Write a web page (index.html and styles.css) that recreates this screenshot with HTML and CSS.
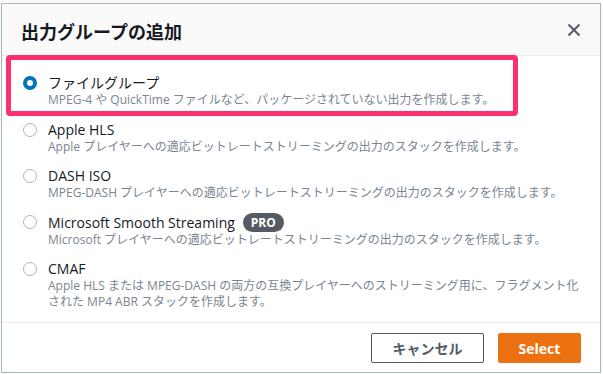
FILE: index.html
```html
<!DOCTYPE html>
<html lang="ja">
<head>
    <meta charset="UTF-8">
    <meta name="viewport" content="width=device-width, initial-scale=1.0">
    <title>出力グループの追加</title>
    <link rel="stylesheet" href="styles.css">
</head>
<body>
    <div class="modal">
        <div class="modal-header">
            <h2>出力グループの追加</h2>
            <button class="close-btn" aria-label="閉じる">
                <svg width="14" height="14" viewBox="0 0 14 14">
                    <path d="M1.5 1.5 L12.5 12.5 M12.5 1.5 L1.5 12.5" stroke="#545b64" stroke-width="2" fill="none"/>
                </svg>
            </button>
        </div>

        <div class="modal-body">
            <div class="highlight"></div>

            <label class="option">
                <span class="radio checked"></span>
                <span class="option-text">
                    <span class="option-label">ファイルグループ</span>
                    <span class="option-desc">MPEG-4 や QuickTime ファイルなど、パッケージされていない出力を作成します。</span>
                </span>
            </label>

            <label class="option">
                <span class="radio"></span>
                <span class="option-text">
                    <span class="option-label">Apple HLS</span>
                    <span class="option-desc">Apple プレイヤーへの適応ビットレートストリーミングの出力のスタックを作成します。</span>
                </span>
            </label>

            <label class="option">
                <span class="radio"></span>
                <span class="option-text">
                    <span class="option-label">DASH ISO</span>
                    <span class="option-desc">MPEG-DASH プレイヤーへの適応ビットレートストリーミングの出力のスタックを作成します。</span>
                </span>
            </label>

            <label class="option">
                <span class="radio"></span>
                <span class="option-text">
                    <span class="option-label">Microsoft Smooth Streaming <span class="badge">PRO</span></span>
                    <span class="option-desc">Microsoft プレイヤーへの適応ビットレートストリーミングの出力のスタックを作成します。</span>
                </span>
            </label>

            <label class="option">
                <span class="radio"></span>
                <span class="option-text">
                    <span class="option-label">CMAF</span>
                    <span class="option-desc">Apple HLS または MPEG-DASH の両方の互換プレイヤーへのストリーミング用に、フラグメント化<br>された MP4 ABR スタックを作成します。</span>
                </span>
            </label>
        </div>

        <div class="modal-footer">
            <button class="btn btn-cancel">キャンセル</button>
            <button class="btn btn-primary">Select</button>
        </div>
    </div>
</body>
</html>
```

FILE: styles.css
```css
body, html {
    margin: 0;
    padding: 0;
    background: #fafafa;
    font-family: "Open Sans", "Noto Sans CJK JP", sans-serif;
}

.modal {
    margin: 3px 0 0 1px;
    width: 600px;
    height: 370px;
    box-sizing: border-box;
    background: #ffffff;
    border: 1px solid #aab7b8;
    display: flex;
    flex-direction: column;
}

.modal-header {
    background: #fafafa;
    height: 57px;
    box-sizing: border-box;
    border-bottom: 1px solid #eaeded;
    display: flex;
    align-items: center;
    justify-content: space-between;
    padding: 0 19px 0 19px;
}

.modal-header h2 {
    margin: 0;
    font-size: 18px;
    font-weight: bold;
    color: #16191f;
    padding-top: 3px;
}

.close-btn {
    background: none;
    border: none;
    padding: 0;
    width: 14px;
    height: 14px;
    cursor: pointer;
    display: flex;
}

.modal-body {
    position: relative;
    padding: 18px 20px 12px 21px;
    display: flex;
    flex-direction: column;
    gap: 12px;
}

/* pink annotation box round the first option */
.highlight {
    position: absolute;
    top: -1px;
    left: 4px;
    width: 512px;
    height: 61px;
    box-sizing: border-box;
    border: 5px solid #ff2f6e;
    border-radius: 4px;
}

.option {
    display: flex;
    align-items: flex-start;
    gap: 11px;
    cursor: pointer;
}

.option:nth-of-type(2) {
    margin-top: 1px;
}

.radio {
    flex: none;
    width: 14px;
    height: 14px;
    margin-top: 2px;
    box-sizing: border-box;
    border-radius: 50%;
    border: 1.5px solid #aab7b8;
    background: #ffffff;
}

.radio.checked {
    border: 4px solid #0073bb;
}

.option-text {
    display: flex;
    flex-direction: column;
}

.option-label {
    font-size: 14px;
    line-height: 18px;
    color: #16191f;
    display: flex;
    align-items: center;
}

.option-desc {
    font-size: 12px;
    line-height: 16px;
    color: #7b8591;
}

.badge {
    margin-left: 8px;
    background: #545b64;
    color: #ffffff;
    font-size: 12px;
    font-weight: bold;
    line-height: 19px;
    padding: 0 8px;
    border-radius: 10px;
}

.modal-footer {
    margin-top: auto;
    border-top: 1px solid #eaeded;
    display: flex;
    justify-content: flex-end;
    gap: 14px;
    padding: 10px 19px 9px 0;
}

.btn {
    height: 30px;
    box-sizing: border-box;
    font-family: "Open Sans", "Noto Sans CJK JP", sans-serif;
    font-size: 14px;
    font-weight: bold;
    border-radius: 2px;
    cursor: pointer;
}

.btn-cancel {
    width: 113px;
    background: #ffffff;
    color: #545b64;
    border: 1px solid #545b64;
}

.btn-primary {
    width: 83px;
    background: #ec7211;
    color: #ffffff;
    border: 1px solid #ec7211;
}
```
